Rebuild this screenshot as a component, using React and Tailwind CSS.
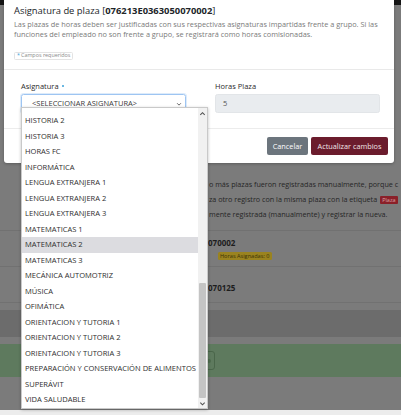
import React from 'react';

const ITEMS = [
  'HISTORIA 2',
  'HISTORIA 3',
  'HORAS FC',
  'INFORMÁTICA',
  'LENGUA EXTRANJERA 1',
  'LENGUA EXTRANJERA 2',
  'LENGUA EXTRANJERA 3',
  'MATEMATICAS 1',
  'MATEMATICAS 2',
  'MATEMATICAS 3',
  'MECÁNICA AUTOMOTRIZ',
  'MÚSICA',
  'OFIMÁTICA',
  'ORIENTACION Y TUTORIA 1',
  'ORIENTACION Y TUTORIA 2',
  'ORIENTACION Y TUTORIA 3',
  'PREPARACIÓN Y CONSERVACIÓN DE ALIMENTOS',
  'SUPERÁVIT',
  'VIDA SALUDABLE',
];

const Chevron = ({ up = false, className = '' }) => (
  <svg viewBox="0 0 8 8" className={className} fill="none" stroke="currentColor" strokeWidth="1.2">
    {up ? <path d="M1.5 5.5 4 3l2.5 2.5" /> : <path d="M1.5 3 4 5.5 6.5 3" />}
  </svg>
);

// dimmed page behind the modal backdrop
const BackgroundPage = () => (
  <div className="flex flex-col h-full">
    <div className="h-[5px] bg-[#151515]" />
    <div className="pl-[209px] pt-[172px] text-[7.2px] leading-[15px] text-[#262626] whitespace-nowrap">
      <p>o más plazas fueron registradas manualmente, porque c</p>
      <p className="flex items-center gap-[3px]">
        za otro registro con la misma plaza con la etiqueta
        <span className="px-[2px] leading-[8px] rounded-[1px] bg-[#8a2029] text-[#d9a3a6] text-[5.5px]">Plaza</span>
      </p>
      <p>mente registrada (manualmente) y registrar la nueva.</p>
    </div>
    <div className="mt-[8px] border-t border-[#717171]">
      <div className="h-[35px] pl-[208px] pt-[6px] flex flex-col">
        <span className="text-[8px] font-bold leading-[12px] text-[#1d1d1d]">070002</span>
        <span className="ml-[10px] mt-[3px] w-fit px-[2px] rounded-[1.5px] bg-[#9a831f] text-[5.6px] leading-[8px] text-[#3a3205]">
          Horas Asignadas: 0
        </span>
      </div>
      <div className="h-[36px] pl-[208px] pt-[6px] border-t border-[#717171]">
        <span className="text-[8px] font-bold leading-[12px] text-[#1d1d1d]">070125</span>
      </div>
    </div>
    <div className="border-t border-[#717171] h-[8px]" />
    <div className="h-[27px] bg-[#6c6c6c]" />
    <div className="h-[7px]" />
    <div className="h-[33px] bg-[#5e7a5e] pl-[198px] pt-[7px]">
      <div className="w-[17px] h-[19px] rounded-[3px] border border-[#4a664a] flex items-center justify-end pr-[3px]">
        <div className="w-[4px] h-[4px] rounded-full bg-[#4d6b4d]" />
      </div>
    </div>
    <div className="flex-1" />
    <div className="h-[5px] bg-[#ececec]" />
  </div>
);

export default function App() {
  return (
    <div className="relative w-[401px] h-[415px] overflow-hidden bg-[#7b7b7b] font-['Open_Sans',sans-serif]">
      <BackgroundPage />

      {/* Modal */}
      <div className="absolute left-[4px] top-0 w-[390px] bg-white rounded-b-[3px] shadow-[0_1px_3px_rgba(0,0,0,0.25)]">
        <div className="px-[10px] pt-[4px] pb-[6px] border-b border-[#e9e9e9]">
          <h5 className="text-[9.4px] leading-[13px] text-[#212529]">
            Asignatura de plaza [<span className="font-bold">076213E0363050070002</span>]
          </h5>
          <p className="mt-[2px] text-[7.35px] leading-[10px] text-[#7a7a7a]">
            Las plazas de horas deben ser justificadas con sus respectivas asignaturas impartidas frente a grupo. Si las funciones del empleado no son frente a grupo, se registrará como horas comisionadas.
          </p>
          <span className="mt-[5px] inline-flex items-center gap-[1px] px-[2px] h-[8px] border border-[#e3e3e3] rounded-[1.5px] text-[5.4px] leading-[7px] text-[#8a8a8a]">
            <span className="text-[#3aa0d8]">*</span> Campos requeridos
          </span>
        </div>

        <div className="grid grid-cols-2 gap-[29px] pl-[17px] pr-[14px] pt-[11px] pb-[15px] border-b border-[#ececec]">
          <div className="flex flex-col">
            <label className="text-[7.5px] leading-[10px] text-[#2b2b2b] mb-[3px] flex items-center gap-[3px]">
              Asignatura
              <span className="w-[2px] h-[2px] rounded-full bg-[#3aa0d8]" />
            </label>
            <div className="h-[19px] flex items-center justify-between pl-[10px] pr-[3px] border border-[#9ec5f2] rounded-[2.5px] shadow-[0_0_0_1px_rgba(158,197,242,0.35)] text-[7.5px] text-[#3a3a3a]">
              <span>&lt;SELECCIONAR ASIGNATURA&gt;</span>
              <Chevron className="w-[6px] h-[6px] text-[#555]" />
            </div>
          </div>
          <div className="flex flex-col">
            <label className="text-[7.5px] leading-[10px] text-[#2b2b2b] mb-[3px]">Horas Plaza</label>
            <div className="h-[19px] flex items-center pl-[7px] rounded-[2.5px] bg-[#e9ecef] border border-[#e2e5e8] text-[7.5px] text-[#555]">
              5
            </div>
          </div>
        </div>

        <div className="flex justify-end gap-[3px] pt-[8px] pb-[8px] pr-[6px]">
          <button className="h-[18px] w-[41px] rounded-[2px] bg-[#6c757d] text-white text-[7.3px]">Cancelar</button>
          <button className="h-[18px] w-[77px] rounded-[2px] bg-[#6b1c2d] text-[#f1e6e8] text-[7.3px]">Actualizar cambios</button>
        </div>
      </div>

      {/* Open native dropdown list */}
      <div className="absolute left-[21px] top-[107px] w-[187px] h-[302px] bg-white border border-[#c9c9c9] shadow-[0_1px_3px_rgba(0,0,0,0.25)] flex">
        <ul className="flex-1 pt-[5px] overflow-hidden">
          {ITEMS.map(item => (
            <li
              key={item}
              className={`h-[15.5px] flex items-center pl-[3px] text-[7.55px] whitespace-nowrap text-[#2e2e2e] ${
                item === 'MATEMATICAS 2' ? 'bg-[#dcdce0]' : ''
              }`}
            >
              {item}
            </li>
          ))}
        </ul>
        <div className="w-[9px] bg-[#f1f1f1] flex flex-col items-center">
          <Chevron up className="w-[7px] h-[7px] mt-[2px] text-[#505050]" />
          <div className="flex-1 w-full px-[1px] pt-[166px] pb-[2px]">
            <div className="h-full rounded-[1px] bg-[#c4c4c4]" />
          </div>
          <Chevron className="w-[7px] h-[7px] mb-[1px] text-[#505050]" />
        </div>
      </div>
    </div>
  );
}
